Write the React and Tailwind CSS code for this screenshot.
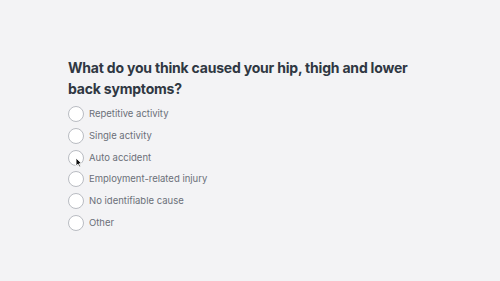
import React from 'react'

const options = [
  'Repetitive activity',
  'Single activity',
  'Auto accident',
  'Employment-related injury',
  'No identifiable cause',
  'Other',
]

const Cursor = () => (
  <svg className='absolute left-[6px] top-[6px]' width='8' height='11' viewBox='0 0 8 11'>
    <path d='M1 1 L1 9 L3 7.2 L4.4 10 L5.6 9.4 L4.3 6.7 L6.8 6.6 Z' fill='#111' stroke='#fff' strokeWidth='0.9' strokeLinejoin='round' />
  </svg>
)

export default function App() {
  return (
    <div className='w-[500px] h-[281px] bg-[#f3f3f5] pl-[68px] pt-[57px]' style={{ fontFamily: 'Inter, "Noto Sans", sans-serif' }}>
      <h1 className='text-[14px] leading-[21px] font-bold text-[#2f3742] w-[345px] tracking-[-0.2px]'>
        What do you think caused your hip, thigh and lower back symptoms?
      </h1>
      <div className='mt-[4.5px] flex flex-col'>
        {options.map((o, i) => (
          <label key={o} className='flex items-center h-[21.7px] gap-[5px]'>
            <span className='relative w-[16px] h-[16px] rounded-full border border-[#b9bcc2] bg-white'>
              {i === 2 && <Cursor />}
            </span>
            <span className='text-[9.5px] text-[#6b7079]'>{o}</span>
          </label>
        ))}
      </div>
    </div>
  )
}
